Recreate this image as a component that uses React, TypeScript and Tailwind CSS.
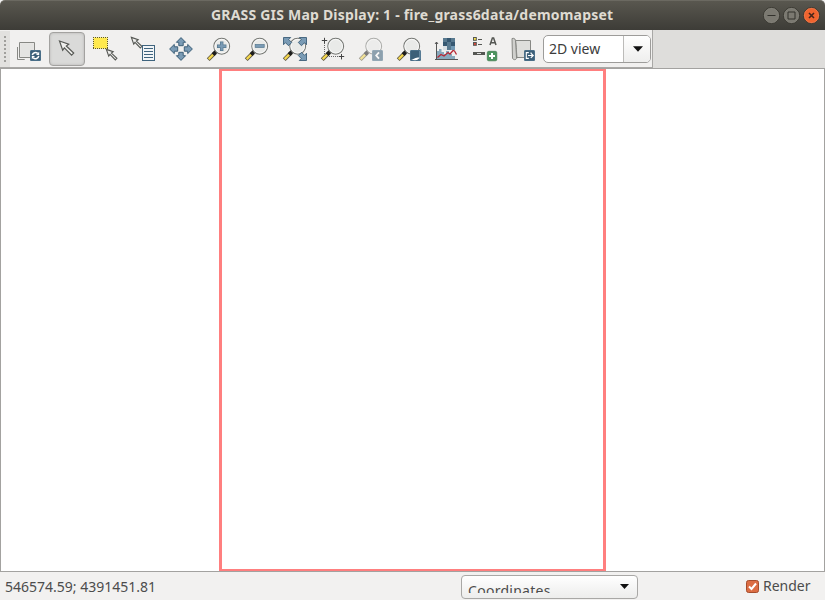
import React from "react";

const LINE = "#555753";
const BLUE = "#7a9bb5";
const NAVY = "#3c5f78";

function Icon({ children, faded }: { children: React.ReactNode; faded?: boolean }) {
  return (
    <div className="flex h-[34px] w-[38px] shrink-0 items-center justify-center">
      <svg width="24" height="24" viewBox="0 0 24 24" fill="none" className={faded ? "overflow-visible opacity-55" : "overflow-visible"}>
        {children}
      </svg>
    </div>
  );
}

function Badge({ children }: { children: React.ReactNode }) {
  return (
    <g>
      <rect x="13" y="13" width="11" height="11" rx="1.5" fill={NAVY} />
      <rect x="13.5" y="13.5" width="10" height="10" rx="1" stroke="#527893" strokeWidth=".6" />
      {children}
    </g>
  );
}

function Lens({ children }: { children?: React.ReactNode }) {
  return (
    <g>
      <path d="M8 15.8L1.2 22.6" stroke="#5d5640" strokeWidth="4" />
      <path d="M7 16.8L1.7 22.1" stroke="#f5d74e" strokeWidth="2.3" />
      <path d="M10 13.6L6 17.6" stroke="#1d1d1d" strokeWidth="3.8" />
      <circle cx="14.7" cy="9.2" r="7.9" fill="#e9eae8" stroke="#777975" strokeWidth="1.1" />
      <circle cx="14.7" cy="9.2" r="6.8" stroke="#fbfbfb" strokeWidth=".9" />
      {children}
    </g>
  );
}

const pointer = "M0.5 0.5L9.7 3.7L7.3 5.5L14.7 12.6L12.6 14.7L5.4 7.4L3.7 9.7Z";
const corner = "M0.5 0.5H7.7L5.7 2.5L8.7 5.5L5.5 8.7L2.5 5.7L0.5 7.7Z";
const panArrow = "M12 .6L16.6 5.3H14.2V8.7H9.8V5.3H7.4Z";

function Toolbar() {
  return (
    <div className="flex h-[38px] w-[653px] items-center border-b border-r border-[#a9a8a6] bg-[#f1f0ef] pt-px">
      <div className="flex h-full w-[10px] shrink-0 flex-col items-center justify-center gap-[2px] bg-[#e2e1df]">
        {Array.from({ length: 7 }, (_, i) => (
          <span key={i} className="h-[2px] w-[2px] bg-[#a09f9c]" />
        ))}
      </div>
      <Icon>
        <path d="M7.7 22.5H.5V10M2.5 5.5H17.5V20.5H2.5Z" stroke="#878884" />
        <rect x="3.2" y="6.2" width="13.6" height="13.6" fill="#e4e4e2" />
        <Badge>
          <path d="M15.3 18.2A3.3 3.3 0 0 1 20.7 16.4M21.7 18.8A3.3 3.3 0 0 1 16.3 20.9" stroke="#fff" strokeWidth="1.5" />
          <path d="M22.2 14.8V18H19ZM14.8 22.3V19H18Z" fill="#fff" />
        </Badge>
      </Icon>
      <div className="flex w-[38px] shrink-0 justify-center">
        <div className="flex h-[34px] w-[36px] items-center justify-center rounded-[4px] border border-[#a3a2a0] bg-[#dadad9] shadow-[inset_0_0_3px_#b5b4b2]">
          <svg width="24" height="24" viewBox="0 0 24 24" fill="none">
            <path d={pointer} transform="translate(4 3.5)" fill="#f0f0ee" stroke={LINE} strokeWidth="1.2" />
          </svg>
        </div>
      </div>
      <Icon>
        <rect x=".5" y=".5" width="14" height="11" fill="#ffe94e" />
        <path d="M0 .5H15M0 11.5H15M.5 0V12M14.5 0V12" stroke="#5d5824" strokeDasharray="1 1" shapeRendering="crispEdges" />
        <path d={pointer} transform="translate(13 12) scale(.74)" fill="#f0f0ee" stroke={LINE} strokeWidth="1.5" />
      </Icon>
      <Icon>
        <path d={pointer} transform="scale(.74)" fill="#f0f0ee" stroke={LINE} strokeWidth="1.5" />
        <rect x="11.5" y="8.5" width="12" height="15" fill="#f2f5f7" stroke="#3f647e" />
        <path d="M13 11.5H22M13 14.5H22M13 17.5H22M13 20.5H22" stroke="#3f647e" />
      </Icon>
      <Icon>
        {["rotate(0 12 12)", "rotate(90 12 12)", "rotate(180 12 12)", "rotate(270 12 12)"].map((t) => (
          <path key={t} d={panArrow} transform={t} fill={BLUE} stroke={NAVY} strokeWidth="1" />
        ))}
      </Icon>
      <Icon>
        <Lens>
          <path d="M14.7 4.5V13.9M10 9.2H19.4" stroke="#56788f" strokeWidth="3.4" />
          <path d="M14.7 5.2V13.2M10.7 9.2H18.7" stroke={BLUE} strokeWidth="2" />
        </Lens>
      </Icon>
      <Icon>
        <Lens>
          <rect x="10.2" y="7.5" width="9" height="3" fill={BLUE} stroke="#56788f" strokeWidth=".7" />
        </Lens>
      </Icon>
      <Icon>
        <Lens />
        {["", "translate(24 0) scale(-1 1)", "translate(24 24) scale(-1 -1)"].map((t) => (
          <path key={t} d={corner} transform={t} fill={BLUE} stroke={NAVY} strokeWidth=".9" />
        ))}
      </Icon>
      <Icon>
        <path d="M3.5 6V19.5H17.5" stroke="#666" strokeDasharray="1 1" />
        <Lens />
        <path d="M3.5 .8V6.2M.8 3.5H6.2M20.5 17V22.4M17.8 19.5H23.2" stroke="#444" />
      </Icon>
      <Icon faded>
        <Lens />
        <Badge>
          <path d="M20 15.3L17.2 18.5L20 21.7" stroke="#fff" strokeWidth="1.8" />
        </Badge>
      </Icon>
      <Icon>
        <Lens />
        <Badge>
          <path d="M14 22.8C18 22 17.5 20.5 22.5 20.5C21.5 22.3 20.7 23 18 23.3Z" fill="#fff" />
          <path d="M22.8 14V22.5" stroke="#8fb0c5" strokeWidth=".7" />
        </Badge>
      </Icon>
      <Icon>
        <path d="M8 1h12v12H8Z" fill="#58798f" />
        <path d="M12 1h4v4h-4ZM8 5h4v4H8ZM16 5h4v4h-4Z" fill="#365871" />
        <path d="M8 9h4v4H8Z" fill="#d9e0e4" />
        <path d="M16 9h4v4h-4Z" fill="#729ab5" />
        <path d="M1.5 22.5V14H4V12H6.5V15H9V17H11V14H14V17H17V19H20V22.5Z" fill="#88a9bd" />
        <path d="M1.5 5V23M0 22.5H23M0 7L1.5 5L3 7" stroke="#555" />
        <path d="M2.5 20.5L6 17.5L9 19L13 15.5L15 17L18 13.5L19.5 14L21.5 17.5" stroke="#b72734" strokeWidth="1.3" />
      </Icon>
      <Icon>
        <rect x=".5" y=".5" width="2.8" height="2.8" fill="#ffe94e" stroke={LINE} />
        <rect x=".5" y="5.5" width="2.8" height="2.8" fill="#df493c" stroke={LINE} />
        <path d="M5 2.5H9M5 7.5H9" stroke={LINE} />
        <path d="M17 8L19.4 1H20.6L23 8M18 5.8H22" stroke={LINE} strokeWidth="1.5" />
        <path d="M0 15H12V18H0Z" fill={LINE} />
        <path d="M4 16.5H8" stroke="#fff" strokeOpacity=".8" />
        <rect x="14.3" y="14.3" width="9.5" height="9.5" rx="1.5" fill="#4b935d" stroke="#397a4a" strokeWidth=".7" />
        <path d="M19 16V22M16 19H22" stroke="#fff" strokeWidth="2" />
      </Icon>
      <Icon>
        <path d="M4.5 3.5H19.5V20.5H6C5.6 17 5.3 9 4.5 3.5Z" fill="#dededb" stroke="#878884" />
        <path d="M1 1.5C3.8 .8 4.6 2.2 4.6 5L5.6 21.5C4.9 23 2.3 23.2 1.5 21.2Z" fill="#d0d0cd" stroke="#878884" />
        <Badge>
          <path d="M17.8 15.6H15.3V21.4H17.8M20 16.2V15.6" stroke="#fff" strokeWidth="1.1" />
          <path d="M17 18.5H21.8M19.8 16.1L22.2 18.5L19.8 20.9" stroke="#fff" strokeWidth="1.2" />
        </Badge>
      </Icon>
      <div className="ml-px flex h-[28px] w-[108px] shrink-0 overflow-hidden rounded-[5px] border border-[#9d9c9a] bg-white">
        <span className="flex-1 whitespace-nowrap pl-[5px] text-[14px] leading-[25px] text-[#3c3c3c]">2D view</span>
        <span className="flex w-[27px] items-center justify-center border-l border-[#bcbbb9] bg-linear-to-b from-white to-[#eeeeed] pl-px">
          <svg width="10" height="6" viewBox="0 0 10 6"><path d="M0 .3H10L5 5.7Z" fill="#111" /></svg>
        </span>
      </div>
    </div>
  );
}

export default function App() {
  return (
    <div className="flex h-[600px] w-[825px] flex-col overflow-hidden bg-[#f2f1f0] font-['Noto_Sans',sans-serif]">
      <header className="grid h-[30px] shrink-0 grid-cols-[1fr_auto_1fr] items-center rounded-t-[5px] border-t border-[#6b6961] bg-linear-to-b from-[#59574f] to-[#3d3c37]">
        <span />
        <h1 className="w-[403px] whitespace-nowrap pb-[2px] text-[14px] font-bold leading-[25px] tracking-[0.2px] text-[#dfdbd2]">GRASS GIS Map Display: 1 - fire_grass6data/demomapset</h1>
        <div className="flex items-center justify-end gap-[3px] pb-px pr-[5.5px]">
          {[0, 1, 2].map((i) => (
            <svg key={i} width="17" height="17" viewBox="0 0 17 17" fill="none">
              <circle cx="8.5" cy="8.5" r="8" fill={i === 2 ? "#f0642f" : "#7b7971"} stroke="#393831" />
              <circle cx="8.5" cy="8.5" r="7.2" stroke={i === 2 ? "#f58a60" : "#8b8980"} strokeWidth=".5" />
              {i === 0 && <path d="M4.5 8.5H12.5" stroke="#33322d" />}
              {i === 1 && <path d="M5 5H12V12H5Z" stroke="#33322d" />}
              {i === 2 && <path d="M6 6L11 11M11 6L6 11" stroke="#45251a" strokeWidth="1.6" />}
            </svg>
          ))}
        </div>
      </header>
      <div className="h-[38px] shrink-0 bg-[#dedddb]">
        <Toolbar />
      </div>
      <main className="flex h-[504px] shrink-0 justify-center border border-[#a3a2a0] bg-white">
        <div className="h-[502px] w-[387px] border-[3px] border-b-2 border-t-2 border-[#ff7f7f]" />
      </main>
      <footer className="flex min-h-0 flex-1 items-center text-[#4c4c4c]">
        <span className="w-[461px] whitespace-nowrap pl-[5px] pt-[2px] text-[14px] leading-[20px]">546574.59; 4391451.81</span>
        <div className="mt-px flex h-[24px] w-[177px] items-center justify-between rounded-[4px] border border-[#a9a8a6] bg-linear-to-b from-white to-[#ededec] pl-[6px] pr-[8px]">
          <span className="mt-[3px] h-[9px] overflow-hidden text-[14px] leading-[9px] tracking-[0.28px]">
            <span className="block pt-[2px]">Coordinates</span>
          </span>
          <svg width="9" height="5" viewBox="0 0 9 5"><path d="M0 0H9L4.5 5Z" fill="#111" /></svg>
        </div>
        <label className="ml-[108px] flex items-center gap-[4px] text-[14px] leading-[20px]">
          <svg width="13" height="13" viewBox="0 0 13 13" fill="none">
            <rect x=".5" y=".5" width="12" height="12" rx="2" fill="#dc6d43" stroke="#a54d2c" />
            <path d="M3 6.5L5.5 9L10 3.5" stroke="#fff" strokeWidth="2" />
          </svg>
          Render
        </label>
      </footer>
    </div>
  );
}
